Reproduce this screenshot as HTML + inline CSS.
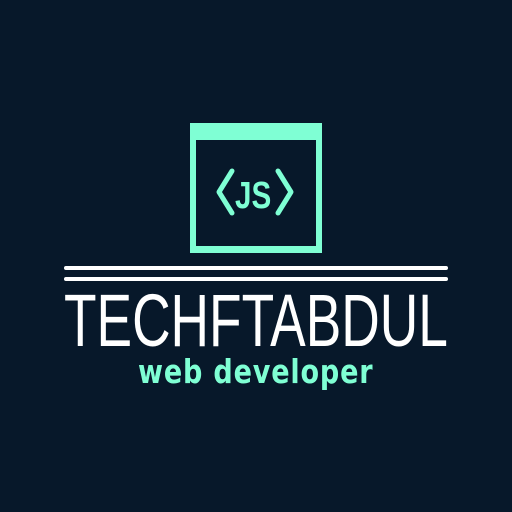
<!DOCTYPE html>
<html><head><style>
html,body{margin:0;padding:0}
body{width:512px;height:512px;background:#07182a;position:relative;overflow:hidden;font-family:"Liberation Sans",sans-serif}
.box{position:absolute;left:190px;top:123px;width:120px;height:106px;border:6px solid #7fffd4;border-top:17px solid #7fffd4;border-bottom-width:7px}
.line{position:absolute;left:64px;width:384px;height:4px;background:#fff;border-radius:2px}
.title{position:absolute;left:64px;top:281px;color:#fff;font-size:74px;line-height:80px;white-space:nowrap;transform-origin:0 0;transform:scaleX(0.72)}
.sub{position:absolute;left:138px;top:352px;color:#7fffd4;font-size:33px;font-weight:bold;line-height:40px;white-space:nowrap;letter-spacing:1px;font-family:"DejaVu Sans",sans-serif;transform-origin:0 0;transform:scaleX(0.82)}
</style></head><body>
<div class="box">
<svg style="position:absolute;left:0;top:0" width="120" height="106" viewBox="0 0 120 106">
<polyline points="36,31 23,52 36,73" fill="none" stroke="#7fffd4" stroke-width="5" stroke-linecap="round" stroke-linejoin="round"/>
<polyline points="82,31 95,52 82,73" fill="none" stroke="#7fffd4" stroke-width="5" stroke-linecap="round" stroke-linejoin="round"/>
<text x="0" y="68" fill="#7fffd4" font-family="Liberation Sans" font-weight="bold" font-size="38" transform="translate(39,0) scale(0.78,1)">JS</text>
</svg>
</div>
<div class="line" style="top:266px"></div>
<div class="line" style="top:277px"></div>
<div class="title">TECHFTABDUL</div>
<div class="sub">web developer</div>
</body></html>
